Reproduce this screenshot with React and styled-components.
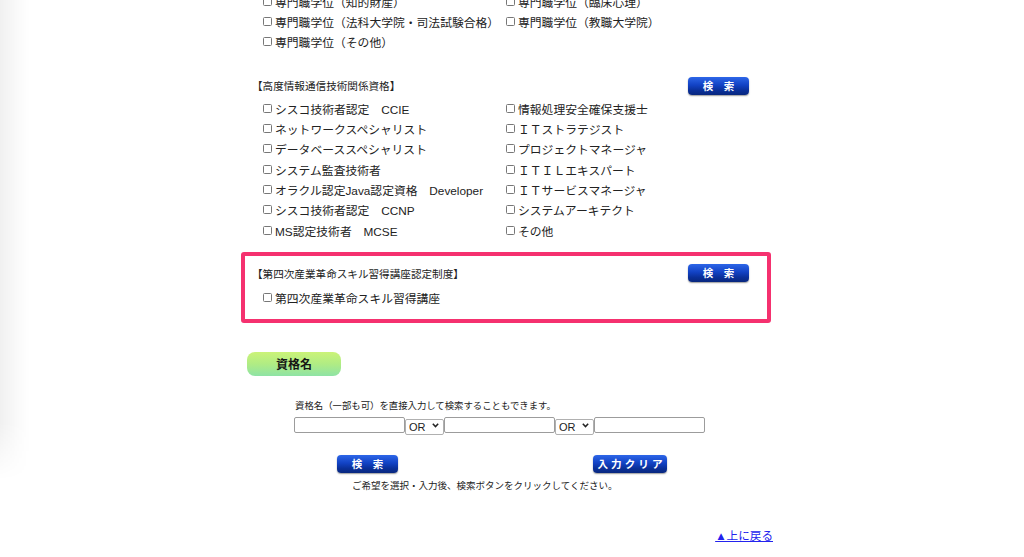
import React from "react";
import styled, { createGlobalStyle, css } from "styled-components";

const GlobalStyle = createGlobalStyle`
  html, body { margin: 0; padding: 0; background: #fff; }
  body {
    font-family: "Liberation Sans", "Noto Sans CJK JP", sans-serif;
    color: #222;
  }
`;

const Page = styled.div`
  position: relative;
  width: 1024px;
  height: 557px;
  overflow: hidden;
  background: #fff;
  &::before {
    content: "";
    position: absolute;
    left: 0;
    top: 0;
    width: 30px;
    height: 480px;
    background: linear-gradient(to right, rgba(0, 0, 0, 0.06), rgba(0, 0, 0, 0.02) 60%, rgba(0, 0, 0, 0));
    -webkit-mask-image: linear-gradient(to bottom, #000 88%, transparent);
    mask-image: linear-gradient(to bottom, #000 88%, transparent);
    pointer-events: none;
  }
`;

const Main = styled.main`
  width: 530px;
  margin: -9px 0 0 241px;
`;

const Section = styled.section`
  margin-top: ${(p) => p.$mt || 0}px;
  ${(p) =>
    p.$boxed
      ? css`
          border: 4px solid #f5316f;
          border-radius: 3px;
          padding: 6px 9px 11px;
        `
      : css`
          padding: 0 13px;
        `}
`;

const HeaderRow = styled.div`
  display: flex;
  justify-content: space-between;
  align-items: center;
  height: 22px;
`;

const HeaderTitle = styled.h3`
  margin: 0 0 0 -2px;
  font-size: 10.6px;
  font-weight: normal;
  color: #222;
  white-space: nowrap;
`;

const Grid = styled.div`
  display: grid;
  grid-template-columns: 243px 1fr;
  grid-auto-rows: 20.33px;
  margin-left: 8px;
  margin-top: ${(p) => p.$gap || 0}px;
`;

const Item = styled.label`
  display: flex;
  align-items: center;
  font-size: 11.8px;
  white-space: nowrap;
  color: #222;
`;

const Check = styled.span`
  display: inline-block;
  box-sizing: border-box;
  width: 9px;
  height: 9px;
  border: 1px solid #777;
  border-radius: 1.5px;
  margin: 0 3px 0 1px;
  flex: none;
`;

const BlueButton = styled.button`
  width: ${(p) => p.$w}px;
  height: 18px;
  margin-right: ${(p) => p.$mr || 0}px;
  margin-left: ${(p) => p.$ml || 0}px;
  padding: 0;
  border: 0;
  border-radius: 4px;
  background: linear-gradient(to bottom, #2d66e8 0%, #1242c4 45%, #0a2f98 75%, #08277e 100%);
  box-shadow: 0 1px 1.5px rgba(0, 0, 0, 0.4);
  color: #fff;
  font-family: "Liberation Sans", "Noto Sans CJK JP", sans-serif;
  font-weight: bold;
  font-size: ${(p) => p.$fs || 10.5}px;
  letter-spacing: ${(p) => p.$ls || 0}px;
  text-indent: ${(p) => p.$ls || 0}px;
  line-height: 18px;
  white-space: nowrap;
  flex: none;
`;

const Badge = styled.div`
  width: 94px;
  height: 24px;
  margin: 29px 0 0 6px;
  border-radius: 8px;
  background: linear-gradient(to bottom, #cbf378 0%, #b0ec84 50%, #8ee3a5 100%);
  display: flex;
  align-items: center;
  justify-content: center;
  font-size: 12px;
  font-weight: bold;
  color: #151515;
`;

const Description = styled.p`
  margin: 23px 0 0 54px;
  font-size: 9.4px;
  line-height: 14px;
  color: #222;
  white-space: nowrap;
`;

const InputRow = styled.div`
  display: flex;
  margin: 4px 0 0 53px;
  height: 16px;
`;

const TextInput = styled.input`
  box-sizing: border-box;
  width: 111px;
  height: 16px;
  margin: 0;
  padding: 0 3px;
  border: 1px solid #9c9c9c;
  border-radius: 2px;
  background: #fff;
  font-size: 10px;
`;

const SelectWrap = styled.div`
  position: relative;
  width: 39px;
  height: 16px;
  flex: none;
`;

const Select = styled.select`
  appearance: none;
  -webkit-appearance: none;
  box-sizing: border-box;
  width: 39px;
  height: 16px;
  margin: 0;
  padding: 0 0 0 3px;
  border: 1px solid #b0b0b0;
  border-radius: 2px;
  background: #fff;
  font-family: "Liberation Sans", sans-serif;
  font-size: 11px;
  color: #222;
`;

const Chevron = styled.svg`
  position: absolute;
  right: 5px;
  top: 6px;
  width: 7px;
  height: 5px;
  pointer-events: none;
`;

const ButtonRow = styled.div`
  display: flex;
  margin-top: 22px;
  padding-left: 96px;
`;

const Note = styled.p`
  margin: 6px 0 0 111px;
  font-size: 9.5px;
  line-height: 14px;
  color: #222;
  white-space: nowrap;
`;

const LinkRow = styled.div`
  display: flex;
  justify-content: flex-end;
  margin: 35px -2px 0 0;
`;

const TopLink = styled.a`
  color: #2323ee;
  font-size: 11.6px;
  line-height: 16px;
  text-decoration: underline;
`;

const topRows = [
  ["専門職学位（知的財産）", "専門職学位（臨床心理）"],
  ["専門職学位（法科大学院・司法試験合格）", "専門職学位（教職大学院）"],
  ["専門職学位（その他）"],
];

const itRows = [
  ["シスコ技術者認定　CCIE", "情報処理安全確保支援士"],
  ["ネットワークスペシャリスト", "ＩＴストラテジスト"],
  ["データベーススペシャリスト", "プロジェクトマネージャ"],
  ["システム監査技術者", "ＩＴＩＬエキスパート"],
  ["オラクル認定Java認定資格　Developer", "ＩＴサービスマネージャ"],
  ["シスコ技術者認定　CCNP", "システムアーキテクト"],
  ["MS認定技術者　MCSE", "その他"],
];

const CheckItem = ({ label }) => (
  <Item>
    <Check />
    {label}
  </Item>
);

const CheckGrid = ({ rows, gap }) => (
  <Grid $gap={gap}>
    {rows.flatMap((r, i) =>
      [0, 1].map((j) =>
        r[j] ? <CheckItem key={`${i}-${j}`} label={r[j]} /> : <span key={`${i}-${j}`} />
      )
    )}
  </Grid>
);

const OrSelect = () => (
  <SelectWrap>
    <Select defaultValue="OR">
      <option>OR</option>
      <option>AND</option>
    </Select>
    <Chevron viewBox="0 0 7 5">
      <path d="M0.8 0.8 L3.5 3.6 L6.2 0.8" fill="none" stroke="#222" strokeWidth="1.5" />
    </Chevron>
  </SelectWrap>
);

export default function App() {
  return (
    <Page>
      <GlobalStyle />
      <Main>
        <Section>
          <CheckGrid rows={topRows} gap={0} />
        </Section>

        <Section $mt={23}>
          <HeaderRow>
            <HeaderTitle>【高度情報通信技術関係資格】</HeaderTitle>
            <BlueButton $w={61} $mr={9}>検　索</BlueButton>
          </HeaderRow>
          <CheckGrid rows={itRows} gap={1} />
        </Section>

        <Section $boxed $mt={12}>
          <HeaderRow>
            <HeaderTitle>【第四次産業革命スキル習得講座認定制度】</HeaderTitle>
            <BlueButton $w={61} $mr={9}>検　索</BlueButton>
          </HeaderRow>
          <CheckGrid rows={[["第四次産業革命スキル習得講座"]]} gap={3} />
        </Section>

        <Badge>資格名</Badge>

        <Description>資格名（一部も可）を直接入力して検索することもできます。</Description>
        <InputRow>
          <TextInput type="text" />
          <OrSelect />
          <TextInput type="text" />
          <OrSelect />
          <TextInput type="text" />
        </InputRow>

        <ButtonRow>
          <BlueButton $w={61}>検　索</BlueButton>
          <BlueButton $w={74} $ml={195} $fs={10.6} $ls={3}>入力クリア</BlueButton>
        </ButtonRow>
        <Note>ご希望を選択・入力後、検索ボタンをクリックしてください。</Note>

        <LinkRow>
          <TopLink href="#top">▲上に戻る</TopLink>
        </LinkRow>
      </Main>
    </Page>
  );
}
